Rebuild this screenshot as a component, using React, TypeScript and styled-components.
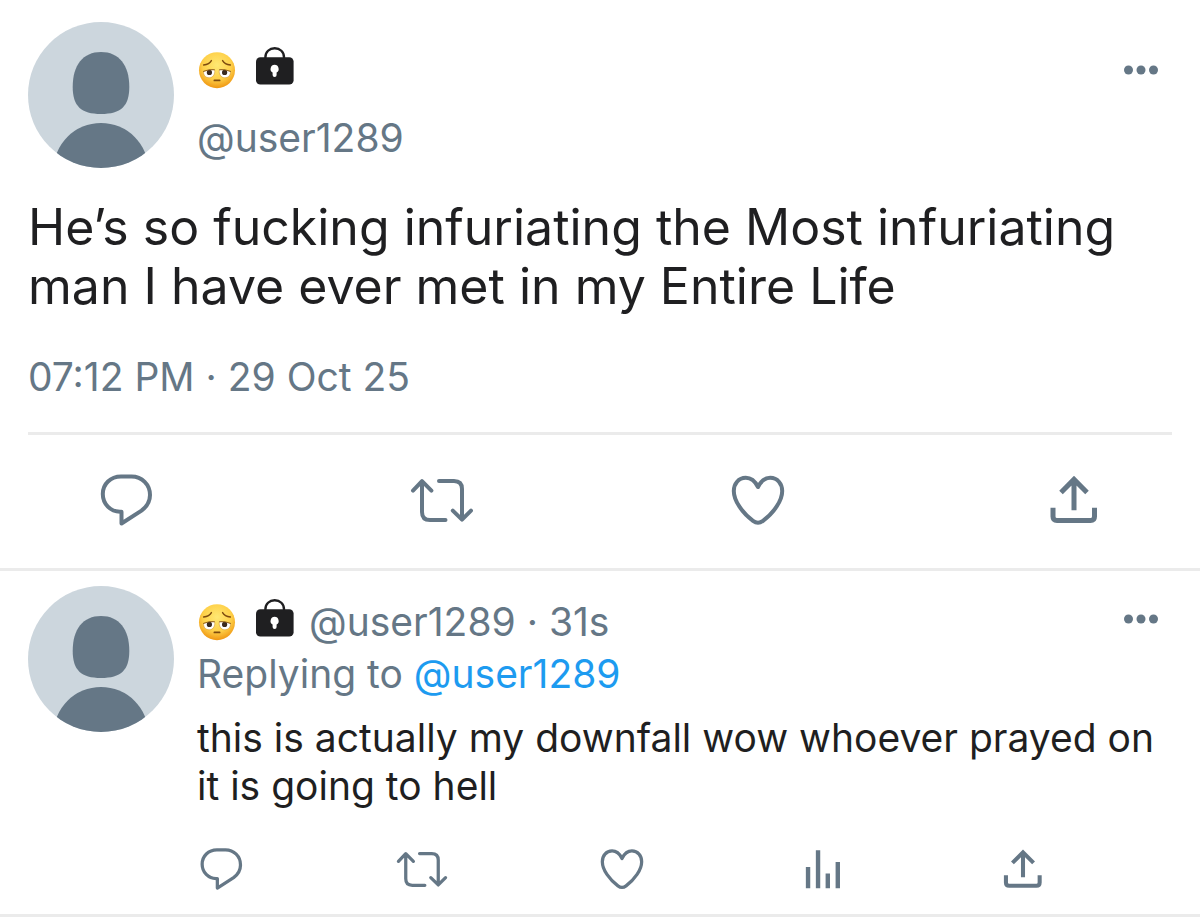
import React, { useId } from "react";
import styled, { createGlobalStyle } from "styled-components";

const colors = {
  ink: "#1f1f21",
  muted: "#657786",
  link: "#1d9bf0",
  line: "#ebebeb",
  avatar: "#ccd6dd",
};

const GlobalStyle = createGlobalStyle`
  * { box-sizing: border-box; }
  body {
    margin: 0;
    background: #fff;
    color: ${colors.ink};
    font-family: Inter, "Liberation Sans", sans-serif;
    font-optical-sizing: none;
  }
`;

const Page = styled.main`
  width: 100%;
`;

const Post = styled.article`
  padding: 22px 28px 0;
  border-bottom: 3px solid ${colors.line};
`;

const Reply = styled.article`
  display: flex;
  gap: 23px;
  padding: 15px 28px 19px;
  border-bottom: 3px solid ${colors.line};
`;

const Header = styled.header`
  display: flex;
  align-items: flex-start;
  gap: 23px;
`;

const AvatarSvg = styled.svg`
  flex: none;
  width: 146px;
  height: 146px;
`;

const Column = styled.div`
  flex: 1;
  min-width: 0;
`;

const TopLine = styled.div<{ $space: number }>`
  display: flex;
  align-items: center;
  height: 46px;
  margin-top: ${(p) => p.$space}px;
`;

const NameIcons = styled.span`
  display: flex;
  gap: 20px;
  margin-right: 14px;
`;

const NameSvg = styled.svg`
  display: block;
  width: 39px;
  height: 46px;
`;

const Meta = styled.div`
  font-size: 39px;
  line-height: 50px;
  color: ${colors.muted};
  white-space: nowrap;
`;

const ReplyingTo = styled(Meta)`
  margin-top: 4px;
`;

const Handle = styled.a<{ $accent?: boolean }>`
  color: ${(p) => (p.$accent ? colors.link : colors.muted)};
  text-decoration: none;
`;

const HandleLine = styled(Meta)`
  margin-top: 20px;
`;

const MoreButton = styled.button<{ $raised?: boolean }>`
  display: flex;
  margin: 0 13px 0 auto;
  padding: 0 0 ${(p) => (p.$raised ? 6 : 0)}px;
  border: 0;
  background: none;
  color: ${colors.muted};
  cursor: pointer;
`;

const PostText = styled.p`
  margin: 30px 0 0;
  font-size: 50px;
  line-height: 59px;
`;

const Timestamp = styled.time`
  display: block;
  margin-top: 36px;
  font-size: 39px;
  line-height: 50px;
  color: ${colors.muted};
`;

const ReplyText = styled.p`
  margin: 15px 0 0;
  font-size: 39px;
  line-height: 48px;
`;

const PostActions = styled.footer`
  display: flex;
  justify-content: space-between;
  margin-top: 30px;
  padding: 33px 66px 36px;
  border-top: 3px solid ${colors.line};
`;

const ReplyActions = styled.footer`
  display: flex;
  justify-content: space-between;
  margin: 33px 0 0 -2px;
  padding-right: 123px;
`;

const ActionButton = styled.button<{ $size: number }>`
  display: flex;
  padding: 0;
  border: 0;
  background: none;
  color: ${colors.muted};
  cursor: pointer;

  svg {
    width: ${(p) => p.$size}px;
    height: ${(p) => p.$size}px;
    fill: none;
    stroke: currentColor;
    stroke-width: 4;
  }
`;

const icons = {
  Reply: (
    <path
      strokeLinejoin="round"
      d="M27.5 43.7V55.5L47.5 42.6C53 38.5 56 33 56 27C56 16.5 48 8.5 37.5 8.5H27C16.5 8.5 8.8 16 8.8 26C8.8 36 16.5 43.7 26 43.7Z"
    />
  ),
  Retweet: (
    <path
      strokeLinecap="round"
      strokeLinejoin="round"
      d="M3 22.6L12 13.2L21.4 22.6M12 14V44Q12 52 20 52H35.5M29 13H44Q52 13 52 21V51M42.8 42.6L52 51.6L61 42.6"
    />
  ),
  Like: (
    <path
      strokeLinejoin="round"
      d="M32 19C29 13 25 9.8 19.8 9.8C12.5 9.8 7.8 15.8 7.8 23C7.8 33 16.5 45 27 52.8Q32 56.6 37 52.8C47.5 45 56.2 33 56.2 23C56.2 15.8 51.5 9.8 44.2 9.8C39 9.8 35 13 32 19Z"
    />
  ),
  Analytics: (
    <path strokeWidth="5.4" d="M13.6 55.8V29.5M25.9 55.8V9M37.9 55.8V37.5M50.2 55.8V23.4" />
  ),
  Share: (
    <path
      strokeWidth="5"
      d="M32 42.3V12M19 24.4L32 11.4L45 24.4M11 39.7V48.6Q11 52.6 15 52.6H48.5Q52.5 52.6 52.5 48.6V39.7"
    />
  ),
};

type IconName = keyof typeof icons;

function Action({ name, size }: { name: IconName; size: number }) {
  return (
    <ActionButton type="button" aria-label={name} $size={size}>
      <svg viewBox="0 0 64 64" aria-hidden="true">
        {icons[name]}
      </svg>
    </ActionButton>
  );
}

function Avatar() {
  const clip = useId();
  return (
    <AvatarSvg viewBox="0 0 146 146" role="img" aria-label="Default avatar">
      <clipPath id={clip}>
        <circle cx="73" cy="73" r="73" />
      </clipPath>
      <g clipPath={`url(#${clip})`}>
        <rect width="146" height="146" fill={colors.avatar} />
        <path
          fill={colors.muted}
          d="M73 30C55 30 44.7 43 44.7 65C44.7 84 53 92 73 92S101.3 84 101.3 65C101.3 43 91 30 73 30Z"
        />
        <circle cx="73" cy="148.6" r="47.6" fill={colors.muted} />
      </g>
    </AvatarSvg>
  );
}

function PensiveFace() {
  const fill = useId();
  return (
    <NameSvg viewBox="0 0 39 46" role="img" aria-label="Weary face">
      <defs>
        <radialGradient id={fill} cx="50%" cy="36%" r="66%">
          <stop offset="0" stopColor="#ffe873" />
          <stop offset="0.6" stopColor="#fed049" />
          <stop offset="1" stopColor="#ee920e" />
        </radialGradient>
      </defs>
      <circle cx="20" cy="23.2" r="18" fill={`url(#${fill})`} />
      <g fill="none" stroke="#7d4a0e" strokeWidth="1.4" strokeLinecap="round">
        <path d="M6.6 18C10 17.6 13 16.2 14.4 13.6M33.4 18C30 17.6 27 16.2 25.6 13.6" />
        <path d="M17.4 33.4H22.6" strokeWidth="1.8" />
      </g>
      <g fill="#fff" stroke="#c98a2a" strokeWidth="0.5">
        <path d="M6.6 24.6C9.6 23.4 14 22.4 17.6 22.8C18.4 27 16 30.8 12.2 30.8C8.6 30.8 6.2 28 6.6 24.6Z" />
        <path d="M33.4 24.6C30.4 23.4 26 22.4 22.4 22.8C21.6 27 24 30.8 27.8 30.8C31.4 30.8 33.8 28 33.4 24.6Z" />
      </g>
      <g fill="#3b2a20">
        <circle cx="12.4" cy="25.4" r="2.6" />
        <circle cx="27.6" cy="25.4" r="2.6" />
      </g>
      <g fill="none" stroke="#8a5a1a" strokeWidth="0.9" strokeLinecap="round">
        <path d="M6.4 24.4C9.6 23.2 14 22.2 17.4 22.7M33.6 24.4C30.4 23.2 26 22.2 22.6 22.7" />
      </g>
    </NameSvg>
  );
}

function Lock() {
  return (
    <NameSvg viewBox="0 0 39 46" role="img" aria-label="Protected account">
      <path
        fill="none"
        stroke={colors.ink}
        strokeWidth="2.4"
        d="M9.4 13V10.2C9.4 5 13.4 1.2 18.7 1.2S28 5 28 10.2V13"
      />
      <rect x="0" y="10.2" width="37.6" height="27.4" rx="4.4" fill={colors.ink} />
      <path
        fill="#fff"
        d="M18.6 17.8A4.2 4.2 0 0 0 16.6 25.6V28A2 2 0 0 0 20.6 28V25.6A4.2 4.2 0 0 0 18.6 17.8Z"
      />
    </NameSvg>
  );
}

function Name() {
  return (
    <NameIcons>
      <PensiveFace />
      <Lock />
    </NameIcons>
  );
}

function More({ raised }: { raised?: boolean }) {
  return (
    <MoreButton type="button" aria-label="More" $raised={raised}>
      <svg width="36" height="12" viewBox="0 0 36 12" fill="currentColor" aria-hidden="true">
        <circle cx="5.5" cy="6" r="4.5" />
        <circle cx="18" cy="6" r="4.5" />
        <circle cx="30.5" cy="6" r="4.5" />
      </svg>
    </MoreButton>
  );
}

export default function App() {
  return (
    <Page>
      <GlobalStyle />
      <Post>
        <Header>
          <Avatar />
          <Column>
            <TopLine $space={25}>
              <Name />
              <More />
            </TopLine>
            <HandleLine>
              <Handle href="#user1289">@user1289</Handle>
            </HandleLine>
          </Column>
        </Header>
        <PostText>
          He’s so fucking infuriating the Most infuriating man I have ever met in my Entire Life
        </PostText>
        <Timestamp dateTime="2025-10-29T19:12">07:12 PM · 29 Oct 25</Timestamp>
        <PostActions>
          <Action name="Reply" size={64} />
          <Action name="Retweet" size={64} />
          <Action name="Like" size={64} />
          <Action name="Share" size={64} />
        </PostActions>
      </Post>
      <Reply>
        <Avatar />
        <Column>
          <TopLine $space={13}>
            <Name />
            <Meta>
              <Handle href="#user1289">@user1289</Handle> · 31s
            </Meta>
            <More raised />
          </TopLine>
          <ReplyingTo>
            Replying to{" "}
            <Handle href="#user1289" $accent>
              @user1289
            </Handle>
          </ReplyingTo>
          <ReplyText>this is actually my downfall wow whoever prayed on it is going to hell</ReplyText>
          <ReplyActions>
            <Action name="Reply" size={52} />
            <Action name="Retweet" size={52} />
            <Action name="Like" size={52} />
            <Action name="Analytics" size={52} />
            <Action name="Share" size={52} />
          </ReplyActions>
        </Column>
      </Reply>
    </Page>
  );
}
